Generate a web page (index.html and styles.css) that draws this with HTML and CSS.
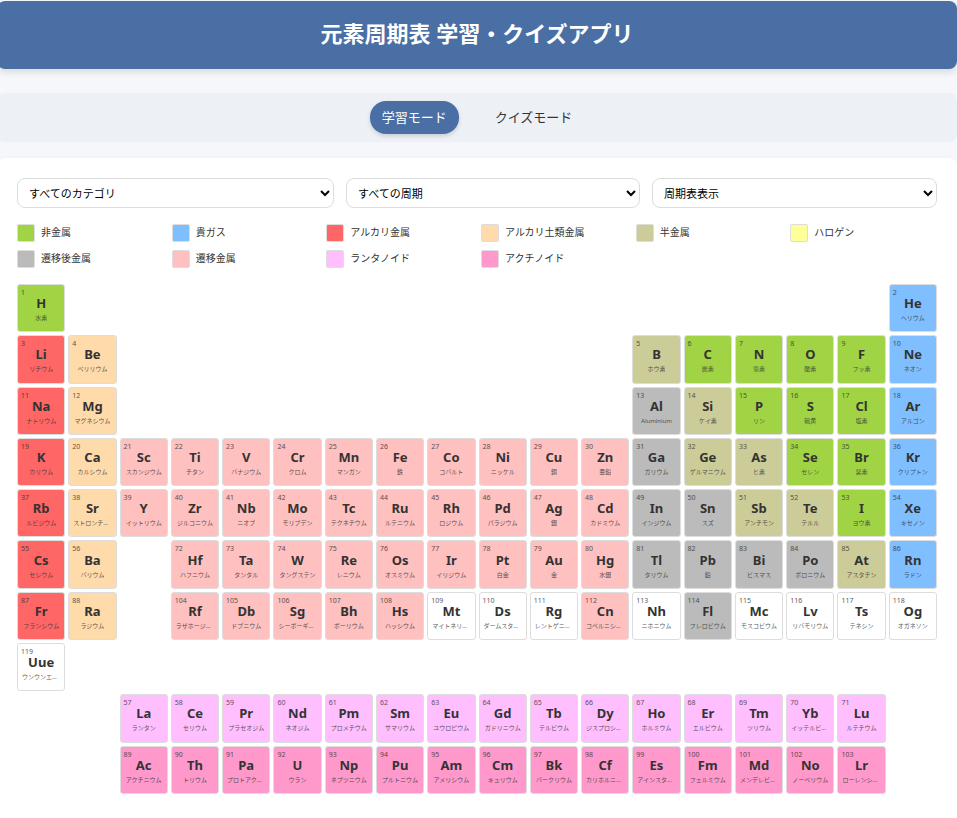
FILE: index.html
```html
<!DOCTYPE html>
<html lang="ja">
<head>
<meta charset="utf-8">
<meta name="viewport" content="width=device-width, initial-scale=1">
<title>元素周期表 学習・クイズアプリ</title>
<link rel="stylesheet" href="styles.css">
</head>
<body>
<div class="app">
  <header class="header"><h1>元素周期表 学習・クイズアプリ</h1></header>
  <nav class="modes">
    <button type="button" class="mode mode-active">学習モード</button>
    <button type="button" class="mode">クイズモード</button>
  </nav>
  <main class="panel">
    <div class="filters">
      <select class="filter" aria-label="カテゴリ"><option>すべてのカテゴリ</option></select>
      <select class="filter" aria-label="周期"><option>すべての周期</option></select>
      <select class="filter" aria-label="表示"><option>周期表表示</option></select>
    </div>
    <ul class="legend">
      <li><span class="swatch nonmetal"></span>非金属</li>
      <li><span class="swatch noble"></span>貴ガス</li>
      <li><span class="swatch alkali"></span>アルカリ金属</li>
      <li><span class="swatch alkaline"></span>アルカリ土類金属</li>
      <li><span class="swatch metalloid"></span>半金属</li>
      <li><span class="swatch halogen"></span>ハロゲン</li>
      <li><span class="swatch post"></span>遷移後金属</li>
      <li><span class="swatch transition"></span>遷移金属</li>
      <li><span class="swatch lanthanide"></span>ランタノイド</li>
      <li><span class="swatch actinide"></span>アクチノイド</li>
    </ul>
    <div class="periodic" id="periodic"></div>
  </main>
</div>
<script src="script.js"></script>
</body>
</html>
```
FILE: styles.css
```css
* { box-sizing: border-box; }

body {
  margin: 0;
  background: #f5f7fb;
  color: #333;
  font-family: "Noto Sans", "Noto Sans CJK JP", sans-serif;
}

.app {
  display: flex;
  flex-direction: column;
  min-height: 100vh;
  margin-left: -3px;
  padding-top: 1px;
}

.header {
  padding: 16px 20px 20px;
  border-radius: 8px;
  background: #4a6fa5;
  box-shadow: 0 4px 6px rgba(0, 0, 0, 0.1);
  color: #fff;
  text-align: center;
}

.header h1 {
  margin: 0;
  font-size: 22px;
  line-height: 32px;
}

.modes {
  display: flex;
  justify-content: center;
  gap: 24px;
  margin: 24px 0 16px;
  padding: 8px;
  border-radius: 8px;
  background: #edf0f5;
}

.mode {
  padding: 0 12px;
  border: 0;
  border-radius: 16px;
  background: transparent;
  color: #333;
  font: inherit;
  font-size: 13px;
  line-height: 33px;
  cursor: pointer;
}

.mode-active {
  background: #4a6fa5;
  box-shadow: 0 2px 4px rgba(0, 0, 0, 0.15);
  color: #fff;
}

.panel {
  flex: 1;
  padding: 20px;
  border-radius: 8px 8px 0 0;
  background: #fff;
  box-shadow: 0 0 4px rgba(0, 0, 0, 0.03);
}

.filters {
  display: grid;
  grid-template-columns: 317fr 294fr 285fr;
  gap: 12px;
}

.filter {
  min-width: 0;
  height: 30px;
  padding: 0 7px;
  border: 1px solid #ddd;
  border-radius: 8px;
  background: #fff;
  color: #000;
  font: inherit;
  font-size: 11px;
}

.legend {
  display: grid;
  grid-template-columns: repeat(6, 1fr);
  gap: 8px;
  margin: 16px 0;
  padding: 0;
  list-style: none;
  font-size: 10px;
  line-height: 16px;
}

.legend li {
  display: flex;
  gap: 6px;
}

.swatch {
  width: 18px;
  height: 18px;
  border: 1px solid #ddd;
  border-radius: 2px;
}

.periodic {
  display: grid;
  grid-template-columns: repeat(18, minmax(0, 1fr));
  gap: 3px;
}

.element {
  position: relative;
  display: flex;
  flex-direction: column;
  align-items: center;
  justify-content: center;
  gap: 2px;
  min-width: 0;
  aspect-ratio: 1;
  padding: 2px 4px 0;
  border: 1px solid #ddd;
  border-radius: 3px;
  background: #fff;
  color: #333;
  font: inherit;
  cursor: pointer;
}

.number {
  position: absolute;
  top: 3px;
  left: 3px;
  font-size: 7px;
  line-height: 10px;
  opacity: 0.8;
}

.symbol {
  font-size: 13px;
  font-weight: 700;
  line-height: 16px;
}

.name {
  max-width: 100%;
  overflow: hidden;
  font-size: 6px;
  line-height: 10px;
  text-overflow: ellipsis;
  white-space: nowrap;
  opacity: 0.8;
}

.nonmetal { background: #a0d444; }
.noble { background: #80bfff; }
.alkali { background: #ff6666; }
.alkaline { background: #ffdbac; }
.metalloid { background: #cccc99; }
.halogen { background: #ffff99; }
.post { background: #bbbbbb; }
.transition { background: #ffc0c0; }
.lanthanide { background: #ffbfff; }
.actinide { background: #ff99cc; }
```
FILE: script.js
```js
// Each line: first atomic number, grid row, first column, then "symbol name category" entries.
const categories = {
  n: "nonmetal", g: "noble", a: "alkali", e: "alkaline", m: "metalloid",
  p: "post", t: "transition", l: "lanthanide", c: "actinide", u: "unknown"
};

const runs = [
  [1, 1, 1, "H 水素 n"],
  [2, 1, 18, "He ヘリウム g"],
  [3, 2, 1, "Li リチウム a,Be ベリリウム e"],
  [5, 2, 13, "B ホウ素 m,C 炭素 n,N 窒素 n,O 酸素 n,F フッ素 n,Ne ネオン g"],
  [11, 3, 1, "Na ナトリウム a,Mg マグネシウム e"],
  [13, 3, 13, "Al Aluminium p,Si ケイ素 m,P リン n,S 硫黄 n,Cl 塩素 n,Ar アルゴン g"],
  [19, 4, 1, "K カリウム a,Ca カルシウム e,Sc スカンジウム t,Ti チタン t,V バナジウム t,Cr クロム t,Mn マンガン t,Fe 鉄 t,Co コバルト t,Ni ニッケル t,Cu 銅 t,Zn 亜鉛 t,Ga ガリウム p,Ge ゲルマニウム m,As ヒ素 m,Se セレン n,Br 臭素 n,Kr クリプトン g"],
  [37, 5, 1, "Rb ルビジウム a,Sr ストロンチウム e,Y イットリウム t,Zr ジルコニウム t,Nb ニオブ t,Mo モリブデン t,Tc テクネチウム t,Ru ルテニウム t,Rh ロジウム t,Pd パラジウム t,Ag 銀 t,Cd カドミウム t,In インジウム p,Sn スズ p,Sb アンチモン m,Te テルル m,I ヨウ素 n,Xe キセノン g"],
  [55, 6, 1, "Cs セシウム a,Ba バリウム e"],
  [72, 6, 4, "Hf ハフニウム t,Ta タンタル t,W タングステン t,Re レニウム t,Os オスミウム t,Ir イリジウム t,Pt 白金 t,Au 金 t,Hg 水銀 t,Tl タリウム p,Pb 鉛 p,Bi ビスマス p,Po ポロニウム p,At アスタチン m,Rn ラドン g"],
  [87, 7, 1, "Fr フランシウム a,Ra ラジウム e"],
  [104, 7, 4, "Rf ラザホージウム t,Db ドブニウム t,Sg シーボーギウム t,Bh ボーリウム t,Hs ハッシウム t,Mt マイトネリウム u,Ds ダームスタチウム u,Rg レントゲニウム u,Cn コペルニシウム t,Nh ニホニウム u,Fl フレロビウム p,Mc モスコビウム u,Lv リバモリウム u,Ts テネシン u,Og オガネソン u"],
  [119, 8, 1, "Uue ウンウンエンニウム u"],
  [57, 9, 3, "La ランタン l,Ce セリウム l,Pr プラセオジム l,Nd ネオジム l,Pm プロメチウム l,Sm サマリウム l,Eu ユウロピウム l,Gd ガドリニウム l,Tb テルビウム l,Dy ジスプロシウム l,Ho ホルミウム l,Er エルビウム l,Tm ツリウム l,Yb イッテルビウム l,Lu ルテチウム l"],
  [89, 10, 3, "Ac アクチニウム c,Th トリウム c,Pa プロトアクチニウム c,U ウラン c,Np ネプツニウム c,Pu プルトニウム c,Am アメリシウム c,Cm キュリウム c,Bk バークリウム c,Cf カリホルニウム c,Es アインスタイニウム c,Fm フェルミウム c,Md メンデレビウム c,No ノーベリウム c,Lr ローレンシウム c"]
];

const table = document.getElementById("periodic");

function part(className, text) {
  const span = document.createElement("span");
  span.className = className;
  span.textContent = text;
  return span;
}

for (const [first, row, column, list] of runs) {
  list.split(",").forEach((entry, i) => {
    const [symbol, name, category] = entry.split(" ");
    const cell = document.createElement("button");
    cell.type = "button";
    cell.className = "element " + categories[category];
    cell.style.gridArea = row + " / " + (column + i);
    cell.append(part("number", first + i), part("symbol", symbol), part("name", name));
    table.append(cell);
  });
}
```
